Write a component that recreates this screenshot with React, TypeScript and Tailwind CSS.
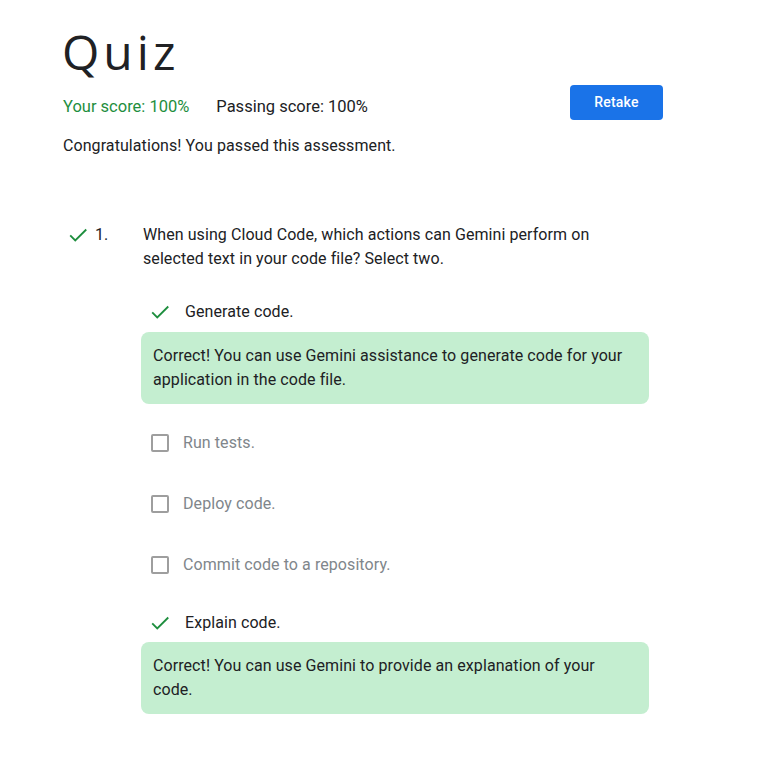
import React from "react";

const Check = ({ className = "" }: { className?: string }) => (
  <svg width="22" height="22" viewBox="0 0 24 24" className={className}>
    <path d="M3.5 12.5l5.5 5.5L21 6" fill="none" stroke="#1e8e3e" strokeWidth="2" />
  </svg>
);

const Box = () => <div className="w-[18px] h-[18px] border-2 border-[#9e9e9e] rounded-[2px] shrink-0" />;

export default function App() {
  return (
    <div className="min-h-[764px] bg-white text-[#202124] tracking-[0.08px]" style={{ fontFamily: "Roboto, 'Liberation Sans', sans-serif" }}>
      <div className="pl-[63px] pr-[116px] pt-[22px]">
        <h1 className="text-[48px] leading-[60px] text-[#202124] tracking-[4px] -ml-[1px]" style={{ fontFamily: "'Open Sans', Roboto, sans-serif" }}>Quiz</h1>
        <div className="flex items-center justify-between mt-[11px]">
          <div className="flex text-[16.5px] leading-6 tracking-normal">
            <span className="text-[#1e8e3e]">Your score: 100%</span>
            <span className="ml-[27px]">Passing score: 100%</span>
          </div>
          <button className="bg-[#1a73e8] text-white text-[14px] font-medium rounded-[4px] w-[93px] h-[35px] -mt-[8px] tracking-[0.2px]">Retake</button>
        </div>
        <p className="mt-[14px] text-[16px] leading-6">Congratulations! You passed this assessment.</p>

        <div className="mt-[65px] flex text-[16px] leading-6">
          <div className="flex items-center h-6 w-[80px] shrink-0">
            <Check className="ml-[4px]" />
            <span className="ml-[6px]">1.</span>
          </div>
          <div className="w-[460px]">
            <p>When using Cloud Code, which actions can Gemini perform on selected text in your code file? Select two.</p>
          </div>
        </div>

        <div className="ml-[78px] w-[508px] text-[16px] leading-6 mt-[29px]">
          <div className="flex items-center h-6">
            <Check className="ml-[8px]" />
            <span className="ml-[14px]">Generate code.</span>
          </div>
          <div className="mt-[8px] bg-[#c4eed0] rounded-[8px] pl-3 pr-6 py-3">
            Correct! You can use Gemini assistance to generate code for your application in the code file.
          </div>

          <div className="flex items-center h-6 mt-[27px] text-[#80868b]">
            <div className="ml-[10px]"><Box /></div>
            <span className="ml-[14px]">Run tests.</span>
          </div>
          <div className="flex items-center h-6 mt-[37px] text-[#80868b]">
            <div className="ml-[10px]"><Box /></div>
            <span className="ml-[14px]">Deploy code.</span>
          </div>
          <div className="flex items-center h-6 mt-[37px] text-[#80868b]">
            <div className="ml-[10px]"><Box /></div>
            <span className="ml-[14px]">Commit code to a repository.</span>
          </div>

          <div className="flex items-center h-6 mt-[34px]">
            <Check className="ml-[8px]" />
            <span className="ml-[14px]">Explain code.</span>
          </div>
          <div className="mt-[7px] bg-[#c4eed0] rounded-[8px] pl-3 pr-6 py-3">
            Correct! You can use Gemini to provide an explanation of your code.
          </div>
        </div>
      </div>
    </div>
  );
}
